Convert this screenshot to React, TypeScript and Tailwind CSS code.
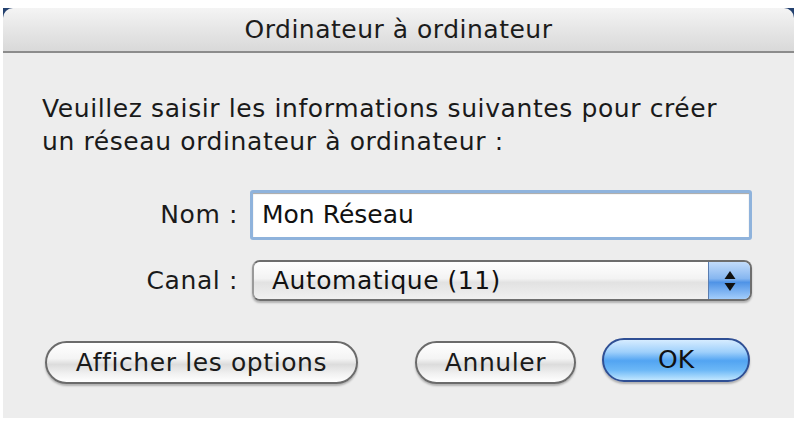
import React from "react";

const font = { fontFamily: '"DejaVu Sans", "Liberation Sans", sans-serif' };

function Stepper() {
  return (
    <svg width="14" height="26" viewBox="0 0 14 26">
      <path d="M7 3 L12.5 11 L1.5 11 Z" fill="#111" />
      <path d="M7 23 L12.5 15 L1.5 15 Z" fill="#111" />
    </svg>
  );
}

function PillButton({ label, className = "" }: { label: string; className?: string }) {
  return (
    <div
      className={
        "flex items-center justify-center rounded-full border-2 border-[#6b6b6b] h-[43px] bg-[linear-gradient(#ffffff_0%,#f4f4f4_40%,#dcdcdc_55%,#f2f2f2_80%,#ffffff_100%)] shadow-[0_2px_2px_rgba(0,0,0,0.25)] text-[25px] tracking-[0.6px] text-[#1a1a1a] " +
        className
      }
    >
      {label}
    </div>
  );
}

export default function App() {
  return (
    <div className="w-[798px] h-[425px] bg-white" style={font}>
      <div className="ml-[3px] pt-[8px] w-[791px]">
        <div className="bg-[#24416f]">
          <div className="h-[45px] rounded-t-[10px] bg-[linear-gradient(#f4f4f4,#e6e6e6_50%,#d9d9d9)] border-b-2 border-[#8c8c8c] flex items-center justify-center">
            <span className="text-[25px] text-[#1c1c1c] tracking-[0.5px]">Ordinateur à ordinateur</span>
          </div>
          <div className="bg-[#ededed] h-[365px] pl-[39px] pr-[30px] pt-[39px]">
            <p className="text-[25px] leading-[33px] text-[#1a1a1a] tracking-[0.6px] whitespace-nowrap">
              Veuillez saisir les informations suivantes pour créer
              <br />
              un réseau ordinateur à ordinateur :
            </p>
            <div className="mt-[32px] flex items-center">
              <div className="w-[196px] text-right text-[25px] tracking-[0.6px] text-[#1a1a1a]">Nom :</div>
              <div className="ml-[12px] w-[502px] h-[50px] rounded-[3px] border-[3px] border-[#8fb3dc] bg-white shadow-[inset_0_1px_1px_rgba(0,0,0,0.35)] flex items-center pl-[9px] text-[25px] text-[#111]">
                Mon Réseau
              </div>
            </div>
            <div className="mt-[20px] flex items-center">
              <div className="w-[196px] text-right text-[25px] tracking-[0.6px] text-[#1a1a1a]">Canal :</div>
              <div className="ml-[14px] w-[500px] h-[41px] rounded-[8px] border-2 border-[#6e6e6e] border-l-[#9a9a9a] overflow-hidden flex shadow-[0_2px_2px_rgba(0,0,0,0.25)]">
                <div className="flex-1 flex items-center pl-[18px] text-[25px] tracking-[0.5px] text-[#111] bg-[linear-gradient(#ffffff,#f3f3f3_45%,#e2e2e2_55%,#f0f0f0)]">
                  Automatique (11)
                </div>
                <div className="w-[42px] flex items-center justify-center border-l border-[#5a7db0] bg-[linear-gradient(#c2dcfb,#86b6f0_45%,#4f93e6_55%,#a3cdfb)]">
                  <Stepper />
                </div>
              </div>
            </div>
            <div className="mt-[40px] flex items-center">
              <PillButton label="Afficher les options" className="ml-[3px] w-[313px]" />
              <PillButton label="Annuler" className="ml-[57px] w-[161px]" />
              <div className="ml-[26px] -mt-[5px] w-[148px] h-[44px] rounded-full border-2 border-[#2f4f94] flex items-center justify-center text-[25px] text-[#111] bg-[linear-gradient(#d6ecff_0%,#9fd0fb_30%,#52a4f2_52%,#6bb7f6_75%,#bfe6ff_100%)] shadow-[0_2px_2px_rgba(0,0,0,0.25)]">
                OK
              </div>
            </div>
          </div>
        </div>
      </div>
    </div>
  );
}
